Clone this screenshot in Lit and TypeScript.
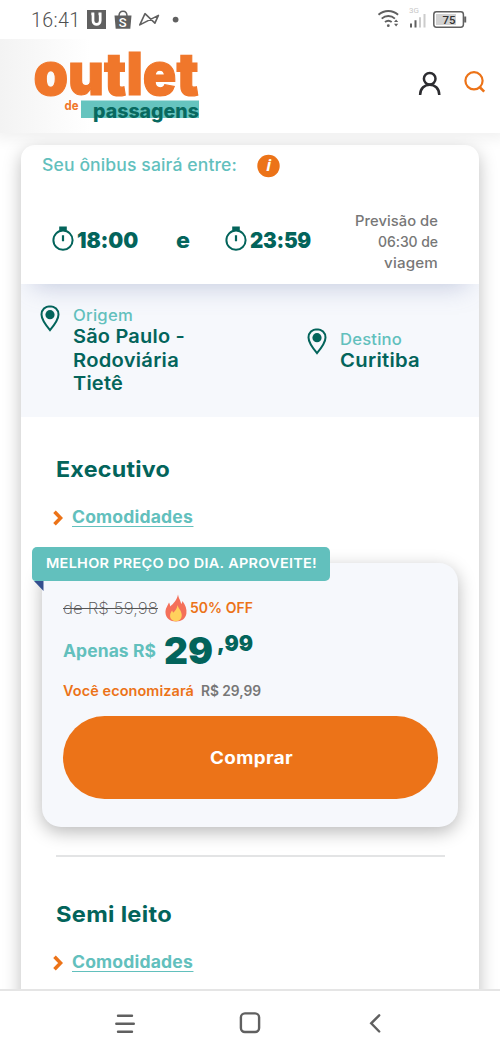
import { LitElement, html, css, svg } from "lit";
import { customElement, property } from "lit/decorators.js";

/** A single line of text whose glyphs are stretched to fill a given width. */
@customElement("fit-line")
class FitLine extends LitElement {
  @property({ type: Number }) w = 0;
  static styles = css`
    :host { display: inline-block; white-space: pre; flex: none; align-self: flex-start; transform-origin: 0 50%; }
  `;
  firstUpdated() {
    const count = (this.textContent || "").length;
    const natural = this.getBoundingClientRect().width;
    const target = this.w + 1;
    const extra = target - natural;
    const tracking = count > 1 ? (extra * 0.25) / count : 0;
    const scale = target / (natural + tracking * count);
    this.style.letterSpacing = `${tracking}px`;
    this.style.transform = `scaleX(${scale})`;
    this.style.width = `${natural + tracking * count}px`;
    this.style.marginRight = `${this.w - (natural + tracking * count)}px`;
  }
  render() {
    return html`<slot></slot>`;
  }
}

const stopwatch = html`<svg class="watch" viewBox="0 0 24 26" width="24" height="26">
  <circle cx="12" cy="14.2" r="9.6" fill="none" stroke="#03645b" stroke-width="2"/>
  <path d="M8.2 .6h7.600v4H8.200z" fill="#03645b"/>
  <path d="M12 9.200v6" stroke="#03645b" stroke-width="2.2"/></svg>`;

const pin = html`<svg class="pin" viewBox="0 0 20 27" width="20" height="27">
  <path d="M10 1.200c-4.800 0-8.500 3.600-8.500 8.300 0 4.500 3.600 9.800 8.500 15.600 4.900-5.800 8.500-11.100 8.500-15.600 0-4.700-3.700-8.300-8.500-8.300z" fill="none" stroke="#03645b" stroke-width="2"/>
  <circle cx="10" cy="9.700" r="4.600" fill="#03645b"/></svg>`;

const chevron = html`<svg class="chev" viewBox="0 0 10 16" width="10" height="16">
  <path d="M1.500 1.700L7.600 8l-6.100 6.300" fill="none" stroke="#ec7318" stroke-width="3.600"/></svg>`;

@customElement("app-root")
class AppRoot extends LitElement {
  static styles = css`
    :host {
      display: flex; flex-direction: column; width: 500px; height: 1056px; overflow: hidden;
      background: #fff; font-family: Inter, "Open Sans", sans-serif; color: #03645b;
    }
    * { box-sizing: border-box; }
    svg { display: block; flex: none; }
    .status { height: 39px; flex: none; background: #fff; }
    .top {
      height: 94px; flex: none; display: flex; position: relative; z-index: 2;
      background: linear-gradient(90deg, #f3f3f3, #fff 90px);
      box-shadow: 0 0 14px 6px rgba(0, 0, 0, .06);
      clip-path: inset(0 0 -30px 0);
    }
    .page { flex: 1; min-height: 0; overflow: hidden; padding: 12px 21px 0; background: #fff; }
    .sheet {
      background: #fff; border-radius: 14px 14px 0 0; height: 900px;
      box-shadow: 0 6px 18px rgba(0, 0, 0, .26); overflow: hidden;
    }
    .depart {
      height: 139px; padding: 10px 42px 0 21px; position: relative;
      box-shadow: 0 14px 24px -12px rgba(102, 116, 170, .36);
    }
    .lead { display: flex; align-items: flex-start; gap: 21px; height: 40px; font-size: 16.8px; line-height: 20px; font-weight: 500; color: #62c0bd; }
    .info { margin-top: -1px; }
    .when { display: flex; align-items: center; margin-top: 15px; height: 63px; }
    .clock { display: flex; align-items: center; font-size: 22px; font-weight: 900; line-height: 24px; }
    .watch { margin-left: 9px; margin-right: 2px; margin-top: -6px; }
    .clock.b .watch { margin-left: 35px; }
    .and { font-size: 22px; font-weight: 800; margin-left: 39px; line-height: 24px; }
    .clock fit-line, .and { align-self: center; margin-top: -3px; }
    .trip { margin-left: auto; display: flex; flex-direction: column; align-items: flex-end; font-size: 14.3px; line-height: 21px; font-weight: 500; color: #777; }
    .trip fit-line { align-self: flex-end; transform-origin: 0 50%; }
    .route {
      height: 133px; background: #f6f8fc; display: flex; align-items: center; padding: 0 19px;
    }
    .stop { display: flex; align-items: flex-start; gap: 13px; }
    .stop.to { margin-left: 123px; }
    .pin { margin-top: -.5px; }
    .place { display: flex; flex-direction: column; align-items: flex-start; font-size: 18.800px; line-height: 23.500px; font-weight: 600; padding-top: 1px; }
    .label { font-size: 15.600px; line-height: 19px; font-weight: 500; color: #62c0bd; }
    .upper { background: #fff; padding: 37.500px 21px 0; }
    .kind { font-size: 22px; line-height: 28px; font-weight: 700; padding-left: 14px; display: flex; }
    .amen { display: flex; align-items: center; gap: 9px; margin-top: 25px; padding-left: 11px; height: 20px; font-size: 16.800px; line-height: 19px; font-weight: 700; color: #62c0bd; }
    .amen fit-line { border-bottom: 1.600px solid #62c0bd; height: 19px; }
    .offer {
      position: relative; margin-top: 35.500px; height: 264px; border-radius: 19px; background: #f6f8fc;
      padding: 31px 21px 0; box-shadow: 0 5px 18px rgba(0, 0, 0, .28);
    }
    .badge {
      position: absolute; left: -10px; top: -16px; width: 298px; height: 34px; border-radius: 5px 5px 5px 4px;
      background: #62c0bd; color: #fff; font-size: 13.200px; line-height: 33px; font-weight: 600; padding-left: 14px;
    }
    .fold { position: absolute; left: -8px; top: 18px; }
    .old { display: flex; align-items: center; height: 28px; line-height: 28px; font-size: 16.500px; font-weight: 200; color: #555; }
    .old .was { text-decoration: line-through; text-decoration-thickness: 1.400px; }
    .flame { margin: 0 2px 0 7px; }
    .off { font-size: 13.800px; font-weight: 600; color: #ec7318; }
    .price { display: flex; margin-top: 9px; height: 40px; line-height: 40px; font-weight: 900; font-size: 37px; }
    .only { font-size: 17px; font-weight: 700; color: #62c0bd; margin-right: 9px; }
    .gap { width: 9px; }
    .cents { font-size: 21.500px; line-height: 24px; margin-left: 5px; }
    .save { display: flex; gap: 8px; margin-top: 10px; height: 20px; line-height: 20px; font-size: 14px; font-weight: 600; color: #ec7318; }
    .save .sum { color: #777; }
    .buy {
      margin: 15px 0 0; width: 375px; height: 83px; border: 0; border-radius: 42px; background: #ec7318; color: #fff;
      font: 700 17.200px/20px Inter, sans-serif; display: flex; align-items: center; justify-content: center; padding: 0;
    }
    .buy fit-line { align-self: center; }
    .rule { height: 1.500px; background: #e3e4e5; margin: 28px 13px 43px 14px; }
    .nav { height: 67px; flex: none; border-top: 2px solid #e5e5e5; background: #fff; position: relative; z-index: 3; }
  `;

  logo() {
    return svg`
      <g font-family="Inter, sans-serif">
        <text x="33.500" y="56" font-size="59" font-weight="900" fill="#f0772b" stroke="#f0772b" stroke-width="1.200" textLength="165" lengthAdjust="spacingAndGlyphs">outlet</text>
        <text x="64.500" y="71" font-size="12.500" font-weight="700" fill="#f0772b" textLength="14" lengthAdjust="spacingAndGlyphs">de</text>
        <path d="M81 61.500h118v17.500H81z" fill="#66c4bf"/>
        <text x="93" y="78.500" font-size="20" font-weight="800" fill="#08695f" textLength="106" lengthAdjust="spacingAndGlyphs">passagens</text>
      </g>`;
  }

  render() {
    return html`
      <div class="status">
        <svg width="500" height="39" viewBox="0 0 500 39" fill="none" stroke="#606060">
          <text x="31" y="27" font-family="Roboto" font-size="19.600" font-weight="300" fill="#505050" stroke="none" textLength="49">16:41</text>
          <path d="M87 10h19v19H87z" fill="#606060" stroke="none"/>
          <path d="M93 13.200v7.600c0 4.800 7.200 4.800 7.200 0v-7.600M91.300 13.900h3M98.500 13.900h3" stroke="#fff" stroke-width="2.700"/>
          <path d="M114.500 15.500h17l-1.200 13.300h-14.600z" fill="#606060" stroke="none"/>
          <path d="M119 16c0-6.500 8-6.500 8 0" stroke-width="1.500"/>
          <text x="118.700" y="27.200" font-family="Roboto" font-size="13" font-weight="500" fill="#fff" stroke="none">S</text>
          <path d="M145 13.700l-5.200 11.200 18.600-9.500-3.500 7.800z" stroke-width="1.600" stroke-linejoin="round"/>
          <circle cx="175.600" cy="19.600" r="2.900" fill="#606060" stroke="none"/>
          <g stroke-width="1.900">
            <path d="M378.500 14.800c5.600-5 14-5 19.600 0M381.700 18.600c3.800-3.400 9.500-3.400 13.200 0M385 22c2-1.600 4.700-1.600 6.700 0"/>
          </g>
          <circle cx="388.300" cy="25.700" r="1.400" fill="#606060" stroke="none"/>
          <path d="M394 22l2.100-2.600 2.100 2.600zM394 23.800l2.100 2.600 2.100-2.600z" fill="#606060" stroke="none"/>
          <text x="409" y="12.800" font-family="Roboto" font-size="8" fill="#c8c8c8" stroke="none">3G</text>
          <path d="M411 27.500v-4M415.500 27.500v-7.300" stroke-width="2"/>
          <path d="M420 27.500V17.200M424.500 27.500V14" stroke="#ccc" stroke-width="2"/>
          <rect x="433.800" y="11.800" width="29.600" height="15.400" rx="2.600" stroke-width="1.500"/>
          <path d="M436 14h20v11h-20z" fill="#d2d2d2" stroke="none"/>
          <path d="M464.200 16.500h2v6h-2z" fill="#606060" stroke="none"/>
          <text x="442.500" y="24" font-family="Roboto" font-size="11.500" font-weight="500" fill="#333" stroke="none">75</text>
        </svg>
      </div>
      <header class="top">
        <svg width="500" height="94" viewBox="0 0 500 94">
          ${this.logo()}
          <g fill="none" stroke="#2c2c30" stroke-width="2.500">
            <circle cx="429.700" cy="39.700" r="5.800"/>
            <path d="M420.100 56c0-13.800 19.200-13.800 19.200 0"/>
          </g>
          <g fill="none" stroke="#ec7318" stroke-width="2.200">
            <circle cx="474" cy="41.800" r="8.600"/>
            <path d="M479.300 47.800l4.900 4.800" stroke-width="2.600"/>
          </g>
        </svg>
      </header>
      <main class="page">
        <div class="sheet">
          <section class="depart">
            <div class="lead">
              <fit-line w="194">Seu ônibus sairá entre:</fit-line>
              <svg class="info" width="24" height="24" viewBox="0 0 24 24">
                <circle cx="11.500" cy="12" r="11.200" fill="#ec7318"/>
                <text x="11.500" y="17.300" text-anchor="middle" font-family="Open Sans" font-style="italic" font-weight="700" font-size="16" fill="#fff">i</text>
              </svg>
            </div>
            <div class="when">
              <div class="clock">${stopwatch}<fit-line w="60">18:00</fit-line></div>
              <fit-line class="and" w="13">e</fit-line>
              <div class="clock b">${stopwatch}<fit-line w="60">23:59</fit-line></div>
              <div class="trip">
                <fit-line w="82">Previsão de</fit-line>
                <fit-line w="59">06:30 de</fit-line>
                <fit-line w="53">viagem</fit-line>
              </div>
            </div>
          </section>
          <section class="route">
            <div class="stop">
              ${pin}
              <div class="place">
                <fit-line class="label" w="59">Origem</fit-line>
                <fit-line w="111">São Paulo -</fit-line>
                <fit-line w="105">Rodoviária</fit-line>
                <fit-line w="49">Tietê</fit-line>
              </div>
            </div>
            <div class="stop to">
              ${pin}
              <div class="place">
                <fit-line class="label" w="61">Destino</fit-line>
                <fit-line w="79">Curitiba</fit-line>
              </div>
            </div>
          </section>
          <section class="upper">
            <div class="kind"><fit-line w="113">Executivo</fit-line></div>
            <div class="amen">${chevron}<fit-line w="120">Comodidades</fit-line></div>
            <div class="offer">
              <svg class="fold" width="10" height="10" viewBox="0 0 10 10"><path d="M0 0h9.500v10z" fill="#344f8e"/></svg>
              <div class="badge"><fit-line w="270">MELHOR PREÇO DO DIA. APROVEITE!</fit-line></div>
              <div class="old">
                <fit-line class="was" w="94">de R$ 59,98</fit-line>
                <svg class="flame" width="24" height="28" viewBox="0 0 24 28">
                  <path d="M14 .500c.8 4.500 2.400 5.300 3.200 9.500.8-.8 1.100-2 1.200-3 3 4 4.600 8 4 12.500-.7 5-4.800 8-10.400 8S1.800 24 1.500 19C1.200 14.500 3.500 12 5 8.500c.8 1.500 1.100 2.500 1.200 4C9.500 9.500 13 6 14 .500z" fill="#f4705a"/>
                  <path d="M13.500 11c.4 3 3.800 5 4.200 9.500.3 4-2.200 6.700-5.700 6.700s-6.200-2.500-5.900-6c.2-2 1-3.200 2-4.700.5 1 .8 1.500 1 2.300 2.200-2 4-4.300 4.400-7.800z" fill="#ffd15c"/>
                </svg>
                <fit-line class="off" w="62">50% OFF</fit-line>
              </div>
              <div class="price">
                <fit-line class="only" w="92">Apenas R$</fit-line>
                <span class="gap"></span>
                <fit-line w="48">29</fit-line>
                <fit-line class="cents" w="35">,99</fit-line>
              </div>
              <div class="save">
                <fit-line w="130">Você economizará</fit-line>
                <fit-line class="sum" w="59">R$ 29,99</fit-line>
              </div>
              <button class="buy"><fit-line w="82">Comprar</fit-line></button>
            </div>
            <div class="rule"></div>
            <div class="kind"><fit-line w="115">Semi leito</fit-line></div>
            <div class="amen">${chevron}<fit-line w="120">Comodidades</fit-line></div>
          </section>
        </div>
      </main>
      <nav class="nav">
        <svg width="500" height="65" viewBox="0 991 500 65" fill="none" stroke="#606060" stroke-width="2.400" stroke-linecap="round">
          <path d="M118 1015.700h14M116.300 1023.800h17.500M118 1031.700h14"/>
          <rect x="240.900" y="1013.400" width="18.200" height="18.600" rx="4"/>
          <path d="M379.200 1015.300l-8 8 8 8.200"/>
        </svg>
      </nav>
    `;
  }
}
